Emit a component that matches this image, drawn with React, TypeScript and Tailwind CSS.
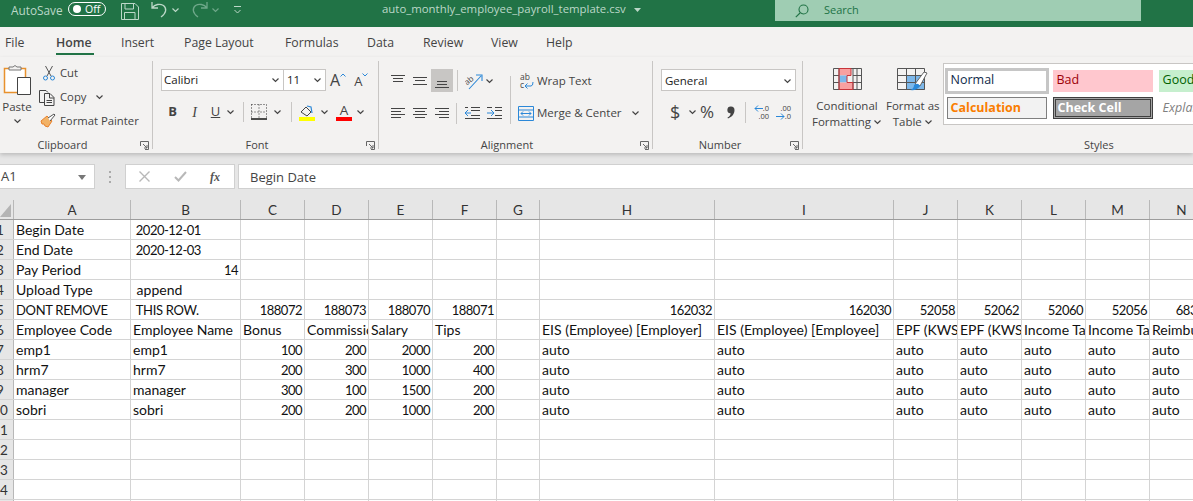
// App.tsx
import type { ReactNode } from "react";

const ui = "font-['Open_Sans','Noto_Sans',sans-serif]";
const cellFont = "font-['Lato','Carlito',sans-serif]";

const Chev = ({ color = "#444", className = "" }: { color?: string; className?: string }) => (
    <svg width="9" height="6" viewBox="0 0 9 6" className={className}>
        <path d="M1.5 1.5 4.5 4.5 7.5 1.5" fill="none" stroke={color} strokeWidth="1.2" />
    </svg>
);

const Launcher = () => (
    <svg width="9" height="9" viewBox="0 0 9 9">
        <path d="M.5 5V.5H8.5V8.5H5M3 3 7 7M7 4V7H4" fill="none" stroke="#666" strokeWidth="1" />
    </svg>
);

// three or four horizontal lines, used by the alignment buttons
const Lines = ({ rows, w = 14 }: { rows: [number, number, number][]; w?: number }) => (
    <svg width={w} height="14" viewBox={`0 0 ${w} 14`}>
        {rows.map(([y, a, b], i) => (
            <path key={i} d={`M${a} ${y + 0.5}H${b}`} stroke="#444" strokeWidth="1" />
        ))}
    </svg>
);

const Sep = ({ className = "" }: { className?: string }) => <div className={`w-px bg-[#c8c6c4] ${className}`} />;

function TitleBar() {
    return (
        <div className={`h-[27px] bg-[#217346] flex items-start text-[#bcd8c8] ${ui}`}>
            <span className="ml-[11px] mt-[1px] text-[11.8px] leading-[18px] w-[51px] whitespace-nowrap">AutoSave</span>
            <div className="ml-[6px] mt-[2px] w-[38px] h-[14px] rounded-full border border-white flex items-center">
                <div className="ml-[4px] w-[8px] h-[8px] rounded-full bg-white" />
                <span className="ml-[4px] text-[10.5px] text-white leading-none">Off</span>
            </div>
            <svg width="18" height="17" viewBox="0 0 18 17" className="ml-[15px] mt-[3px]" fill="none" stroke="#bcd8c8" strokeWidth="1">
                <path d="M.5.5H14L17.5 4V16.5H.5ZM4 .5V6H12.5V.5M3.5 16.5V9.5H14V16.5" />
            </svg>
            <svg width="17" height="17" viewBox="0 0 17 17" className="ml-[12px] mt-[1px]" fill="none" stroke="#bcd8c8" strokeWidth="1.3">
                <path d="M1 1V7H7M1 7C4 3 9 2.5 12.5 4.5 16 7.5 15.5 12 10 16" />
            </svg>
            <Chev color="#bcd8c8" className="ml-[3px] mt-[7px]" />
            <svg width="17" height="17" viewBox="0 0 17 17" className="ml-[11px] mt-[1px]" fill="none" stroke="#6fa88a" strokeWidth="1.3">
                <path d="M16 1V7H10M16 7C13 3 8 2.5 4.5 4.5 1 7.5 1.5 12 7 16" />
            </svg>
            <Chev color="#6fa88a" className="ml-[3px] mt-[7px]" />
            <svg width="9" height="9" viewBox="0 0 9 9" className="ml-[13px] mt-[6px]" fill="none" stroke="#bcd8c8">
                <path d="M1 .5H8M1.5 4 4.5 7 7.5 4" />
            </svg>
            <span className="ml-[140px] text-[11.4px] leading-[18px] w-[246px] whitespace-nowrap">auto_monthly_employee_payroll_template.csv</span>
            <svg width="7" height="4" viewBox="0 0 7 4" className="ml-[6px] mt-[8px]">
                <path d="M0 0H7L3.5 4Z" fill="#bcd8c8" />
            </svg>
            <div className="ml-[134px] w-[366px] h-[21px] bg-[#9fcdb3] flex items-center text-[#217346]">
                <svg width="14" height="14" viewBox="0 0 14 14" className="ml-[20px]" fill="none" stroke="#217346" strokeWidth="1.1">
                    <circle cx="8.5" cy="5.5" r="4.5" />
                    <path d="M5 9 .8 13.2" />
                </svg>
                <span className="ml-[15px] text-[11px]">Search</span>
            </div>
        </div>
    );
}

const tabs = [
    { label: "File", cls: "ml-[5px] w-[19px]" },
    { label: "Home", cls: "ml-[32px] w-[38px] font-semibold border-b-[2px] border-[#217346]" },
    { label: "Insert", cls: "ml-[27px] w-[33px]" },
    { label: "Page Layout", cls: "ml-[30px] w-[72px]" },
    { label: "Formulas", cls: "ml-[29px] w-[54px]" },
    { label: "Data", cls: "ml-[28px] w-[28px]" },
    { label: "Review", cls: "ml-[28px] w-[41px]" },
    { label: "View", cls: "ml-[27px] w-[28px]" },
    { label: "Help", cls: "ml-[27px] w-[28px]" },
];

function Tabs() {
    return (
        <div className={`h-[30px] bg-[#f3f2f1] flex text-[12.3px] text-[#444] ${ui}`}>
            {tabs.map((t) => (
                <div key={t.label} className={`${t.cls} h-[28px] pt-[8px] leading-[16px] whitespace-nowrap`}>
                    {t.label}
                </div>
            ))}
        </div>
    );
}

function Group({ width, label, center, children, launcher = true }: { width: string; label: string; center: string; children: ReactNode; launcher?: boolean }) {
    return (
        <div className={`${width} h-[88px] shrink-0 border-r border-[#c8c6c4] flex flex-col`}>
            <div className="h-[76px]">{children}</div>
            <div className="h-[12px] flex leading-[16px] text-[#444] text-[11px]">
                <div className={`${center} text-center whitespace-nowrap`}>{label}</div>
                {launcher && <div className="ml-auto mr-[3px] mt-[4px]"><Launcher /></div>}
            </div>
        </div>
    );
}

function Clipboard() {
    return (
        <Group width="w-[153px]" label="Clipboard" center="w-[125px]">
            <div className="flex">
                <div className="w-[34px] flex flex-col items-center">
                    <svg width="30" height="32" viewBox="0 0 30 32" className="mt-[3px]">
                        <path d="M2.5 4.5H23.5V28.5H2.5Z" fill="#fff" stroke="#e8912d" strokeWidth="1.5" />
                        <path d="M7 6V3H11Q13 0 15 3H19V6Z" fill="#f3f2f1" stroke="#777" strokeWidth="1" />
                        <path d="M15.5 13.5H28.5V30.5H15.5Z" fill="#fff" stroke="#444" strokeWidth="1" />
                    </svg>
                    <span className="text-[11.5px] text-[#444] leading-[16px] mt-[3px]">Paste</span>
                    <Chev className="mt-[3px]" />
                </div>
                <div className="ml-[6px] flex flex-col text-[#444] text-[11.3px] leading-[16px]">
                    <div className="flex items-center h-[24px]">
                        <svg width="14" height="16" viewBox="0 0 14 16" fill="none" className="ml-[2px]">
                            <path d="M3.5 1 9 11M10.5 1 5 11" stroke="#555" />
                            <circle cx="3.5" cy="13" r="2" stroke="#2b88d8" />
                            <circle cx="10.5" cy="13" r="2" stroke="#2b88d8" />
                        </svg>
                        <span className="ml-[4px]">Cut</span>
                    </div>
                    <div className="flex items-center h-[24px]">
                        <svg width="16" height="17" viewBox="0 0 16 17" fill="none" stroke="#444" className="ml-[-1px]">
                            <path d="M5 13.5H.5V1.5H7L9 3.5" />
                            <path d="M5.5 4.5H11L15 8.5V16.5H5.5ZM10.5 4.5V9H15M7.5 11.5H13M7.5 13.5H13" />
                        </svg>
                        <span className="ml-[5px]">Copy</span>
                        <Chev className="ml-[9px]" />
                    </div>
                    <div className="flex items-center h-[24px]">
                        <svg width="16" height="16" viewBox="0 0 16 16" fill="none">
                            <path d="M1 8 7 3 12 8 8 14 5 13 4 11 2 11Z" fill="#f2b266" stroke="#e8812d" />
                            <path d="M8 5 14 1 15 2 10 8" fill="#fff" stroke="#555" />
                        </svg>
                        <span className="ml-[4px] whitespace-nowrap">Format Painter</span>
                    </div>
                </div>
            </div>
        </Group>
    );
}

function FontGroup() {
    return (
        <Group width="w-[226px]" label="Font" center="w-[208px]">
            <div className="flex mt-[8px] ml-[8px]">
                <div className="w-[123px] h-[22px] bg-white border border-[#c8c6c4] flex items-center pl-[2px] pr-[3px] text-[11.5px] text-[#222]">
                    <span>Calibri</span>
                    <Chev className="ml-auto" />
                </div>
                <div className="w-[42px] h-[22px] bg-white border border-l-0 border-[#c8c6c4] flex items-center pl-[3px] pr-[3px] text-[11.5px] text-[#222]">
                    <span>11</span>
                    <Chev className="ml-auto" />
                </div>
                <div className="ml-[4px] flex items-start text-[#444] leading-none">
                    <span className="text-[16px] mt-[3px]">A</span>
                    <svg width="6" height="4" viewBox="0 0 6 4" className="mt-[4px]"><path d="M.5 3.5 3 1 5.5 3.5" fill="none" stroke="#2b88d8" /></svg>
                    <span className="ml-[8px] text-[13px] mt-[6px]">A</span>
                    <svg width="6" height="4" viewBox="0 0 6 4" className="mt-[4px]"><path d="M.5.5 3 3 5.5.5" fill="none" stroke="#2b88d8" /></svg>
                </div>
            </div>
            <div className="flex items-center h-[22px] mt-[10px] text-[#444]">
                <span className="ml-[14px] w-[11px] text-[13px] font-bold text-center">B</span>
                <span className="ml-[11px] w-[11px] text-[14px] italic text-center font-['Liberation_Serif',serif]">I</span>
                <span className="ml-[10px] w-[11px] text-[13px] underline text-center">U</span>
                <Chev className="ml-[5px]" />
                <Sep className="ml-[8px] h-[20px]" />
                <svg width="16" height="16" viewBox="0 0 16 16" className="ml-[7px]" fill="none">
                    <path d="M.5.5H15.5M.5.5V15M15.5.5V15M8 .5V15M.5 8H15.5" stroke="#333" strokeDasharray="1 2" />
                    <path d="M0 15H16" stroke="#222" strokeWidth="1.6" />
                </svg>
                <Chev className="ml-[6px]" />
                <Sep className="ml-[9px] h-[20px]" />
                <svg width="16" height="17" viewBox="0 0 16 17" className="ml-[7px]" fill="none">
                    <path d="M2 8 7 3 12 8 8 12Z" stroke="#444" />
                    <path d="M8 2 12 3 13 9" stroke="#2b88d8" strokeWidth="1.2" />
                    <rect x="0" y="13" width="16" height="4" fill="#ffff00" />
                </svg>
                <Chev className="ml-[5px]" />
                <div className="ml-[7px] w-[16px] flex flex-col items-center">
                    <span className="text-[13.5px] leading-[13px]">A</span>
                    <div className="w-[16px] h-[4px] bg-[#ff0000]" />
                </div>
                <Chev className="ml-[4px]" />
            </div>
        </Group>
    );
}

function AlignmentGroup() {
    return (
        <Group width="w-[274px]" label="Alignment" center="w-[256px]">
            <div className="flex items-center mt-[8px] h-[23px]">
                <div className="ml-[12px]"><Lines rows={[[1, 0, 14], [4, 2, 12], [7, 2, 12]]} /></div>
                <div className="ml-[8px] mt-[1px]"><Lines rows={[[3, 0, 14], [6, 2, 12], [10, 0, 14]]} /></div>
                <div className="ml-[4px] w-[22px] h-[23px] bg-[#c8c6c4] flex items-center justify-center">
                    <div className="mt-[3px]"><Lines rows={[[6, 2, 12], [9, 2, 12], [12, 0, 14]]} /></div>
                </div>
                <Sep className="ml-[4px] h-[21px]" />
                <svg width="18" height="18" viewBox="0 0 18 18" className="ml-[7px]" fill="none">
                    <text x="0" y="10" fontSize="8" fill="#444" transform="rotate(-40 6 9)">ab</text>
                    <path d="M4 17 16 4M11 3H17V9" stroke="#2b88d8" strokeWidth="1.1" />
                </svg>
                <Chev className="ml-[2px]" />
                <Sep className="ml-[16px] h-[48px] mt-[30px] -mb-[8px]" />
                <div className="ml-[9px] w-[15px] leading-[8px] text-[8.5px] text-[#444] flex flex-col">
                    <span>ab</span>
                    <span className="flex">c
                        <svg width="10" height="8" viewBox="0 0 10 8" fill="none"><path d="M1 5H7Q9 5 9 1M1 5 3.5 2.5M1 5 3.5 7.5" stroke="#2b88d8" /></svg>
                    </span>
                </div>
                <span className="ml-[2px] text-[11.5px] text-[#444] whitespace-nowrap">Wrap Text</span>
            </div>
            <div className="flex items-center mt-[10px] h-[22px]">
                <div className="ml-[12px]"><Lines rows={[[2, 0, 14], [5, 0, 10], [8, 0, 14], [11, 0, 10]]} /></div>
                <div className="ml-[8px]"><Lines rows={[[2, 0, 14], [5, 2, 12], [8, 0, 14], [11, 2, 12]]} /></div>
                <div className="ml-[8px]"><Lines rows={[[2, 0, 14], [5, 4, 14], [8, 0, 14], [11, 4, 14]]} /></div>
                <Sep className="ml-[7px] h-[21px]" />
                <svg width="15" height="14" viewBox="0 0 15 14" className="ml-[8px]" fill="none">
                    <path d="M6 1.5H15M6 4.5H15M6 9.5H15M0 12.5H15M0 1.5H3" stroke="#444" />
                    <path d="M0 7H6M3 4 0 7 3 10" stroke="#2b88d8" />
                </svg>
                <svg width="15" height="14" viewBox="0 0 15 14" className="ml-[7px]" fill="none">
                    <path d="M8 1.5H15M8 4.5H15M8 9.5H15M0 12.5H15M0 1.5H5" stroke="#444" />
                    <path d="M0 7H7M4 4 7 7 4 10" stroke="#2b88d8" />
                </svg>
                <div className="w-px ml-[7px]" />
                <svg width="16" height="15" viewBox="0 0 16 15" className="ml-[8px]" fill="none">
                    <path d="M.5.5H15.5V14.5H.5Z" stroke="#2b88d8" />
                    <path d="M.5 4H15.5M.5 11H15.5M3 7.5H13M3 7.5 5 5.5M3 7.5 5 9.5M13 7.5 11 5.5M13 7.5 11 9.5" stroke="#2b88d8" />
                </svg>
                <span className="ml-[3px] text-[11.5px] text-[#444] whitespace-nowrap">Merge &amp; Center</span>
                <Chev className="ml-[9px]" />
            </div>
        </Group>
    );
}

function NumberGroup() {
    return (
        <Group width="w-[150px]" label="Number" center="w-[134px]">
            <div className="ml-[8px] mt-[8px] w-[135px] h-[22px] bg-white border border-[#c8c6c4] flex items-center pl-[3px] pr-[3px] pt-[1px] text-[11.5px] text-[#222]">
                <span>General</span>
                <Chev className="ml-auto" />
            </div>
            <div className="flex items-center h-[22px] mt-[10px] text-[#444]">
                <span className="ml-[17px] text-[18px] w-[11px] leading-[22px]">$</span>
                <Chev className="ml-[7px]" />
                <span className="ml-[3px] text-[17px] w-[18px] leading-[22px] whitespace-nowrap">%</span>
                <svg width="8" height="13" viewBox="0 0 8 13" className="ml-[9px]">
                    <path d="M4 .5A3.5 3.5 0 0 1 7.5 4C7.5 8 5 11 1 12.5L.5 11.5C2.5 10.5 3.5 9 3.7 7.5A3.5 3.5 0 0 1 4 .5Z" fill="#444" />
                </svg>
                <Sep className="ml-[10px] h-[21px]" />
                <div className="ml-[7px] w-[16px] flex flex-col text-[7.5px] leading-[8px] text-[#444] items-end">
                    <span className="flex items-center">
                        <svg width="9" height="7" viewBox="0 0 9 7" fill="none"><path d="M9 3.5H1M4 .5 1 3.5 4 6.5" stroke="#2b88d8" /></svg>.0
                    </span>
                    <span>.00</span>
                </div>
                <div className="ml-[6px] w-[16px] flex flex-col text-[7.5px] leading-[8px] text-[#444] items-end">
                    <span>.00</span>
                    <span className="flex items-center">
                        <svg width="9" height="7" viewBox="0 0 9 7" fill="none"><path d="M0 3.5H8M5 .5 8 3.5 5 6.5" stroke="#2b88d8" /></svg>.0
                    </span>
                </div>
            </div>
        </Group>
    );
}

function StylesGroup() {
    return (
        <div className="w-[390px] shrink-0 h-[88px] flex flex-col">
            <div className="h-[76px] flex text-[#444] text-[11.5px]">
                <div className="ml-[9px] w-[72px] flex flex-col items-center leading-[16px]">
                    <svg width="29" height="22" viewBox="0 0 29 22" className="mt-[7px] mb-[8px]" fill="none">
                        <rect x="6" y=".5" width="12" height="7" fill="#f8a0a0" />
                        <rect x="6" y="7.5" width="8" height="7" fill="#7db8ea" />
                        <rect x="6" y="14.5" width="14" height="7" fill="#f8a0a0" />
                        <path d="M.5.5H28.5V21.5H.5ZM.5 7.5H6M.5 14.5H6M6 .5V21.5M20 .5V21.5M24 .5V21.5M20 7.5H28.5M20 14.5H28.5" stroke="#555" />
                        <path d="M6 .5H18V7.5H14V14.5H20V21.5H6Z" stroke="#c8343a" />
                    </svg>
                    <span>Conditional</span>
                    <span className="flex items-center whitespace-nowrap">Formatting<Chev className="ml-[2px]" /></span>
                </div>
                <div className="ml-[4px] w-[56px] flex flex-col items-center leading-[16px] whitespace-nowrap">
                    <svg width="31" height="23" viewBox="0 0 31 23" className="mt-[7px] mb-[7px]" fill="none">
                        <rect x="10" y="8" width="18" height="14" fill="#7db8ea" />
                        <path d="M.5.5H27.5V21.5H.5ZM.5 7.5H27.5M.5 14.5H27.5M9.5.5V21.5M18.5.5V21.5" stroke="#555" />
                        <path d="M18 16 27 4 30 5 23 18Z" fill="#fff" stroke="#666" />
                        <path d="M17 17Q21 14 23 18Q20 23 13 22Q17 21 17 17Z" fill="#2b88d8" />
                    </svg>
                    <span>Format as</span>
                    <span className="flex items-center">Table<Chev className="ml-[2px]" /></span>
                </div>
                <div className="ml-[3px] mt-[2px] h-[62px] w-[260px] shrink-0 bg-white border border-[#c8c6c4] border-r-0 text-[12.5px] overflow-hidden whitespace-nowrap">
                    <div className="flex items-center h-[33px]">
                        <div className="ml-[1px] w-[104px] h-[26px] shrink-0 bg-white border-[3px] border-[#c6c6c6] pl-[3px] leading-[18px] text-[#0f2a4a]">Normal</div>
                        <div className="ml-[4px] w-[100px] h-[22px] shrink-0 bg-[#ffc7ce] text-[#9c0006] pl-[4px] leading-[20px]">Bad</div>
                        <div className="ml-[6px] w-[60px] h-[22px] shrink-0 bg-[#c6efce] text-[#006100] pl-[4px] leading-[20px]">Good</div>
                    </div>
                    <div className="flex items-center">
                        <div className="ml-[3px] w-[100px] h-[22px] shrink-0 bg-[#f2f2f2] border border-[#7f7f7f] text-[#fa7d00] font-bold pl-[3px] leading-[19px]">Calculation</div>
                        <div className="ml-[6px] w-[100px] h-[22px] shrink-0 bg-[#a5a5a5] border-[3px] border-double border-[#3f3f3f] text-white font-bold pl-[2px] leading-[16px]">Check Cell</div>
                        <div className="ml-[10px] text-[#7f7f7f] italic">Explanatory</div>
                    </div>
                </div>
            </div>
            <div className="h-[12px] leading-[16px] text-[#444] text-[11px] pl-[281px]">Styles</div>
        </div>
    );
}

function Ribbon() {
    return (
        <div className={`h-[96px] bg-[#f3f2f1] pt-[4px] flex overflow-hidden shadow-[0_2px_4px_rgba(0,0,0,0.18)] relative ${ui}`}>
            <Clipboard />
            <FontGroup />
            <AlignmentGroup />
            <NumberGroup />
            <StylesGroup />
        </div>
    );
}

function FormulaBar() {
    return (
        <div className={`pt-[10px] h-[47px] flex items-start bg-[#e6e6e6] ${ui}`}>
            <div className="mt-[1px] w-[95px] h-[25px] bg-white border border-[#d0d0d0] border-l-0 flex items-center pt-[1px] text-[13px] text-[#444] pr-[8px]">
                <span className="ml-[1px]">A1</span>
                <svg width="8" height="5" viewBox="0 0 8 5" className="ml-auto"><path d="M0 0H8L4 5Z" fill="#777" /></svg>
            </div>
            <div className="ml-[14px] mt-[8px] flex flex-col gap-[3px]">
                <div className="w-[2px] h-[2px] bg-[#aaa]" />
                <div className="w-[2px] h-[2px] bg-[#aaa]" />
                <div className="w-[2px] h-[2px] bg-[#aaa]" />
            </div>
            <div className="ml-[14px] mt-[1px] w-[110px] h-[25px] bg-white border border-[#d0d0d0] flex items-center">
                <svg width="11" height="11" viewBox="0 0 11 11" className="ml-[13px]"><path d="M.5.5 10.5 10.5M10.5.5 .5 10.5" stroke="#b8b8b8" strokeWidth="1.4" /></svg>
                <svg width="13" height="11" viewBox="0 0 13 11" className="ml-[24px]"><path d="M1 6 4.5 9.5 12 1" fill="none" stroke="#b8b8b8" strokeWidth="2" /></svg>
                <span className="ml-[23px] text-[12px] italic text-[#555] font-['Liberation_Serif',serif] font-bold">fx</span>
            </div>
            <div className="ml-[3px] mt-[1px] flex-1 h-[25px] bg-white border border-[#d0d0d0] border-r-0 pl-[11px] text-[13px] text-[#444] leading-[24px]">Begin Date</div>
        </div>
    );
}

const cols = ["A", "B", "C", "D", "E", "F", "G", "H", "I", "J", "K", "L", "M", "N"];
const widths = ["w-[117px]", "w-[110px]", "w-[64px]", "w-[64px]", "w-[64px]", "w-[64px]", "w-[43px]", "w-[175px]", "w-[179px]", "w-[64px]", "w-[64px]", "w-[64px]", "w-[64px]", "w-[64px]"];

// right-aligned cells are given as numbers, text cells as strings
type Cell = string | number | null;
const rowsData: Cell[][] = [
    ["Begin Date", " 2020-12-01"],
    ["End Date", " 2020-12-03"],
    ["Pay Period", 14],
    ["Upload Type", " append"],
    ["DONT REMOVE", " THIS ROW.", 188072, 188073, 188070, 188071, null, 162032, 162030, 52058, 52062, 52060, 52056, 68300],
    ["Employee Code", "Employee Name", "Bonus", "Commission", "Salary", "Tips", null, "EIS (Employee) [Employer]", "EIS (Employee) [Employee]", "EPF (KWSP) [Employer]", "EPF (KWSP) [Employee]", "Income Tax [Employer]", "Income Tax [Employee]", "Reimbursement"],
    ["emp1", "emp1", 100, 200, 2000, 200, null, "auto", "auto", "auto", "auto", "auto", "auto", "auto"],
    ["hrm7", "hrm7", 200, 300, 1000, 400, null, "auto", "auto", "auto", "auto", "auto", "auto", "auto"],
    ["manager", "manager", 300, 100, 1500, 200, null, "auto", "auto", "auto", "auto", "auto", "auto", "auto"],
    ["sobri", "sobri", 200, 200, 1000, 200, null, "auto", "auto", "auto", "auto", "auto", "auto", "auto"],
];

function Sheet() {
    const rows = Array.from({ length: 15 }, (_, i) => rowsData[i] ?? []);
    return (
        <div className={`${cellFont} text-[14px] text-[#111] bg-white`}>
            <div className="flex h-[20px] bg-[#e6e6e6] border-b border-[#9c9c9c]">
                <div className="w-[14px] shrink-0 border-r border-[#b8b8b8] flex items-end justify-start">
                    <svg width="11" height="13" viewBox="0 0 11 13" className="mb-[2px]"><path d="M11 0V13H0Z" fill="#b4b4b4" /></svg>
                </div>
                {cols.map((c, i) => (
                    <div key={c} className={`${widths[i]} shrink-0 border-r border-[#b8b8b8] text-center text-[13.5px] leading-[20px] text-[#333]`}>{c}</div>
                ))}
            </div>
            {rows.map((row, r) => (
                <div key={r} className="flex h-[20px] border-b border-[#d4d4d4]">
                    <div className="w-[14px] shrink-0 bg-[#e6e6e6] border-r border-[#b8b8b8] overflow-hidden text-[13.5px] leading-[20px] text-[#333]">
                        <div className="w-[26px] -ml-[13px] text-center">{r + 1}</div>
                    </div>
                    {cols.map((c, i) => {
                        const v = row[i];
                        const num = typeof v === "number";
                        // Lato digits and capitals run wider than Calibri's, so pull them in
                        const digits = num || (typeof v === "string" && /^[\d\s-]+$/.test(v));
                        const caps = typeof v === "string" && !digits && v === v.toUpperCase();
                        return (
                            <div key={c} className={`${widths[i]} shrink-0 border-r border-[#d4d4d4] overflow-hidden whitespace-pre leading-[20px] ${num ? "text-right pr-[2px]" : "pl-[2px]"} ${digits ? "text-[13px] tracking-[-0.5px]" : ""} ${caps ? "text-[13px] tracking-[-0.3px]" : ""}`}>
                                {v}
                            </div>
                        );
                    })}
                </div>
            ))}
        </div>
    );
}

export default function App() {
    return (
        <div className="w-[1193px] h-[501px] overflow-hidden bg-[#e6e6e6]">
            <TitleBar />
            <Tabs />
            <Ribbon />
            <FormulaBar />
            <Sheet />
        </div>
    );
}
